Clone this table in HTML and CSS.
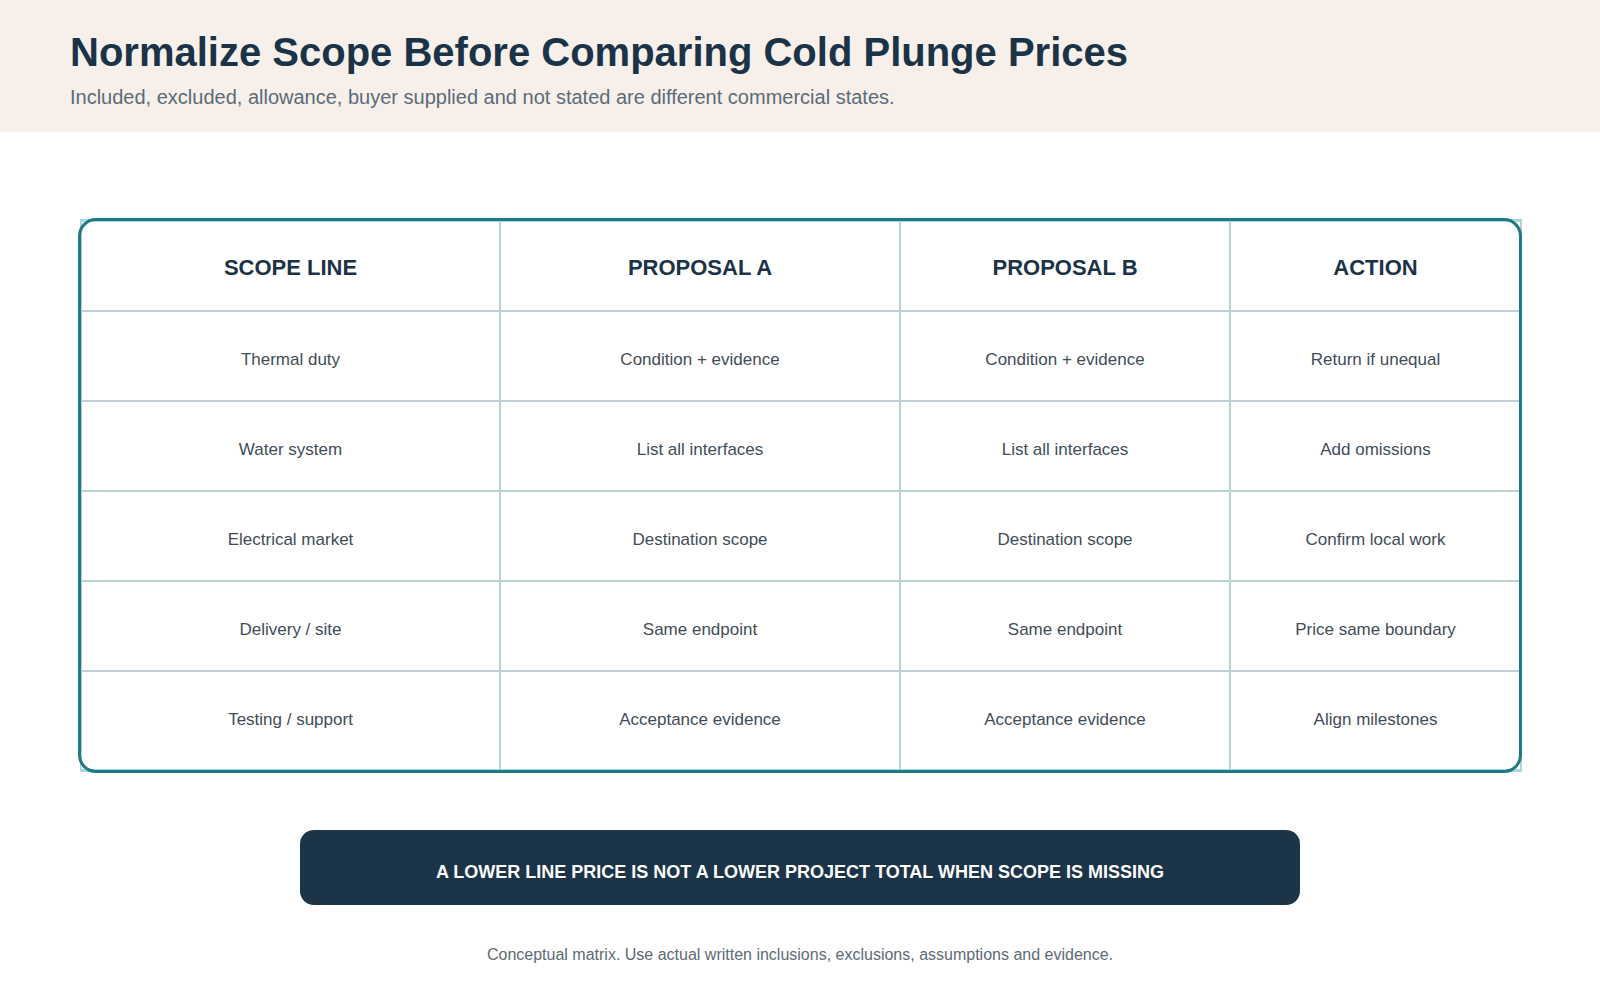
FILE: index.html
```html
<!DOCTYPE html>
<html lang="en">
<head>
<meta charset="utf-8">
<title>Normalize Scope Before Comparing Cold Plunge Prices</title>
<link rel="stylesheet" href="styles.css">
</head>
<body>
<header class="hero">
  <h1 class="hero-title">Normalize Scope Before Comparing Cold Plunge Prices</h1>
  <p class="hero-sub">Included, excluded, allowance, buyer supplied and not stated are different commercial states.</p>
</header>
<main class="content">
  <div class="matrix">
    <table class="grid">
      <colgroup>
        <col class="c1"><col class="c2"><col class="c3"><col class="c4">
      </colgroup>
      <thead>
        <tr class="head-row">
          <th>SCOPE LINE</th><th>PROPOSAL A</th><th>PROPOSAL B</th><th>ACTION</th>
        </tr>
      </thead>
      <tbody>
        <tr><td>Thermal duty</td><td>Condition + evidence</td><td>Condition + evidence</td><td>Return if unequal</td></tr>
        <tr><td>Water system</td><td>List all interfaces</td><td>List all interfaces</td><td>Add omissions</td></tr>
        <tr><td>Electrical market</td><td>Destination scope</td><td>Destination scope</td><td>Confirm local work</td></tr>
        <tr><td>Delivery / site</td><td>Same endpoint</td><td>Same endpoint</td><td>Price same boundary</td></tr>
        <tr class="last-row"><td>Testing / support</td><td>Acceptance evidence</td><td>Acceptance evidence</td><td>Align milestones</td></tr>
      </tbody>
    </table>
    <div class="frame"></div>
  </div>
  <div class="banner">A LOWER LINE PRICE IS NOT A LOWER PROJECT TOTAL WHEN SCOPE IS MISSING</div>
  <p class="note">Conceptual matrix. Use actual written inclusions, exclusions, assumptions and evidence.</p>
</main>
</body>
</html>
```

FILE: styles.css
```css
* { box-sizing: border-box; }
html, body { margin: 0; padding: 0; background: #ffffff; }
body { font-family: "Liberation Sans", Arial, sans-serif; color: #3f4d58; }

.hero {
  background: #f7f0ea;
  height: 132px;
  padding: 28px 70px 0;
}
.hero-title {
  margin: 0;
  font-size: 40px;
  line-height: 48px;
  font-weight: 700;
  color: #1b3347;
}
.hero-sub {
  margin: 9px 0 0;
  font-size: 20px;
  line-height: 24px;
  color: #5b6b78;
}

.content { padding: 87px 80px 0; }

.matrix { position: relative; width: 1440px; }
.grid {
  width: 1440px;
  border-collapse: collapse;
  table-layout: fixed;
  border-top: 3px solid #a9d9de;
  border-bottom: 3px solid #a9d9de;
}
.c1 { width: 419px; }
.c2 { width: 400px; }
.c3 { width: 330px; }
.c4 { width: 291px; }

.grid th, .grid td {
  border: 2px solid #bccfd4;
  text-align: center;
  vertical-align: middle;
  padding: 0;
}
.grid th {
  height: 90px;
  padding-top: 4px;
  font-size: 22px;
  font-weight: 700;
  color: #1b3347;
}
.grid td {
  height: 90px;
  padding-top: 9px;
  font-size: 17px;
  color: #3f4d58;
}
.grid .last-row td { height: 100px; padding-top: 0; }

.frame {
  position: absolute;
  top: -1px; left: -2px; right: -2px; bottom: -1px;
  border: 3px solid #1e7a85;
  border-radius: 18px;
  pointer-events: none;
}

.banner {
  width: 1000px;
  height: 75px;
  margin: 58px 0 0 220px;
  background: #1b3447;
  border-radius: 14px;
  color: #ffffff;
  font-weight: 700;
  font-size: 18px;
  display: flex;
  align-items: center;
  justify-content: center;
  padding-top: 10px;
}

.note {
  margin: 40px 0 0 0;
  text-align: center;
  width: 1440px;
  font-size: 16px;
  line-height: 20px;
  color: #5d6b75;
}
```
